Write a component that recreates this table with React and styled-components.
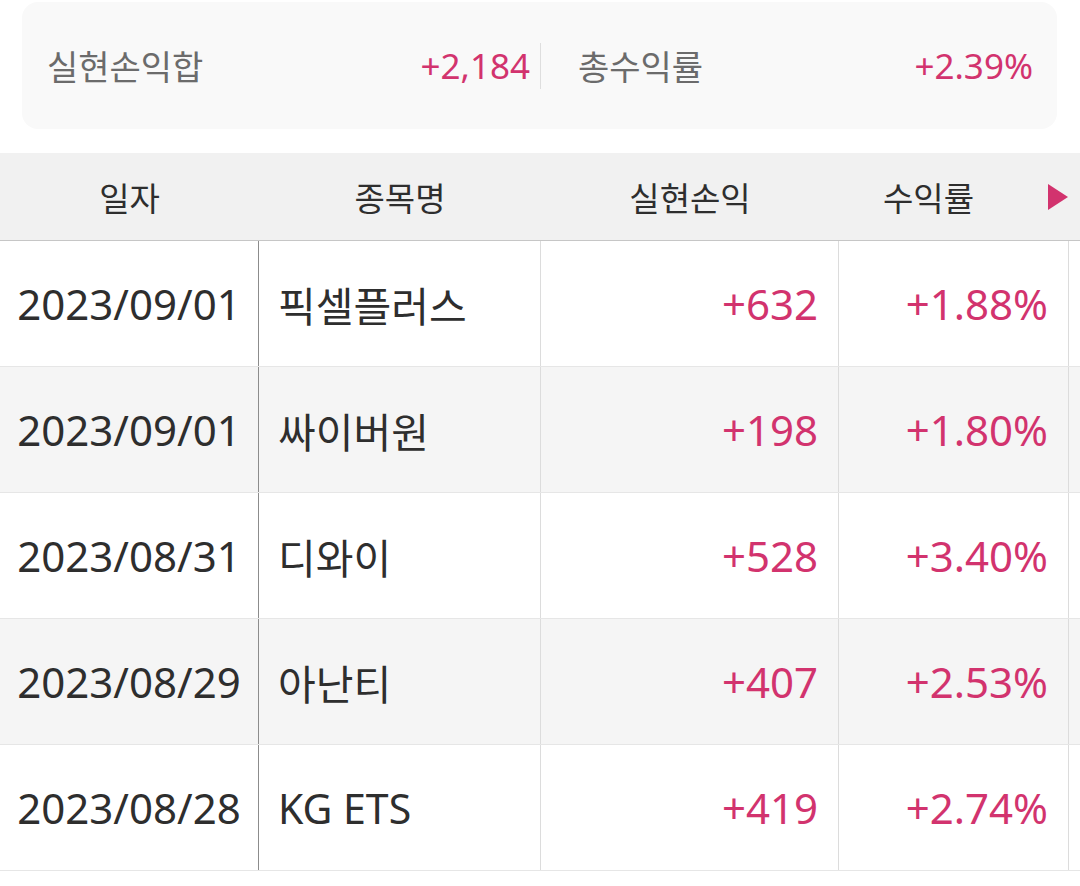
import React from "react";
import styled, { createGlobalStyle } from "styled-components";

const GlobalStyle = createGlobalStyle`
  html, body {
    margin: 0;
    padding: 0;
    background: #ffffff;
  }
  body {
    font-family: "Noto Sans", "Noto Sans CJK KR", sans-serif;
  }
`;

const PINK = "#d2336e";

const Page = styled.div`
  width: 1080px;
  padding-top: 2px;
`;

const Summary = styled.div`
  display: flex;
  align-items: center;
  height: 127px;
  margin: 0 23px 0 22px;
  padding: 0 24px 0 25px;
  background: #f9f9f9;
  border-radius: 16px;
  box-sizing: border-box;
`;

const SummaryHalf = styled.div`
  display: flex;
  align-items: center;
  justify-content: space-between;
  box-sizing: border-box;
  ${({ $first }) =>
    $first ? "width: 493px; padding-right: 10px;" : "flex: 1; padding-left: 37px;"}
`;

const SummaryLabel = styled.span`
  font-size: 34px;
  color: #6b6b6b;
`;

const SummaryValue = styled.span`
  font-size: 35px;
  color: ${PINK};
`;

const Divider = styled.div`
  width: 1px;
  height: 46px;
  background: #dedede;
`;

const Table = styled.div`
  margin-top: 24px;
`;

const cols = "259px 282px 298px 230px 1fr";

const HeaderRow = styled.div`
  display: grid;
  grid-template-columns: ${cols};
  height: 87px;
  background: #f1f1f1;
  border-bottom: 1px solid #c6c6c6;
`;

const HeadCell = styled.div`
  display: flex;
  align-items: center;
  justify-content: center;
  font-size: 33px;
  color: #2e2e2e;
`;

const HeadLabel = styled.span`
  flex: 1;
  text-align: center;
  padding-right: 30px;
`;

const Arrow = styled.svg`
  width: 20px;
  height: 26px;
  margin-right: 1px;
  flex-shrink: 0;
`;

const Row = styled.div`
  display: grid;
  grid-template-columns: ${cols};
  height: 125px;
  background: ${({ $shaded }) => ($shaded ? "#f5f5f5" : "#ffffff")};
  border-bottom: 1px solid #e6e6e6;
`;

const Cell = styled.div`
  display: flex;
  align-items: center;
  justify-content: ${({ $align }) =>
    $align === "right" ? "flex-end" : $align === "left" ? "flex-start" : "center"};
  padding: ${({ $align }) =>
    $align === "right" ? "0 20px 0 0" : $align === "left" ? "0 0 0 19px" : "0"};
  border-right: 1px solid ${({ $dark }) => ($dark ? "#8c8c8c" : "#dcdcdc")};
  font-size: ${({ $size }) => $size}px;
  color: ${({ $pink }) => ($pink ? PINK : "#2e2e2e")};
  white-space: nowrap;
`;

const Filler = styled.div``;

const rows = [
  { date: "2023/09/01", name: "픽셀플러스", pl: "+632", rate: "+1.88%" },
  { date: "2023/09/01", name: "싸이버원", pl: "+198", rate: "+1.80%" },
  { date: "2023/08/31", name: "디와이", pl: "+528", rate: "+3.40%" },
  { date: "2023/08/29", name: "아난티", pl: "+407", rate: "+2.53%" },
  { date: "2023/08/28", name: "KG ETS", pl: "+419", rate: "+2.74%" },
];

export default function App() {
  return (
    <Page>
      <GlobalStyle />
      <Summary>
        <SummaryHalf $first>
          <SummaryLabel>실현손익합</SummaryLabel>
          <SummaryValue>+2,184</SummaryValue>
        </SummaryHalf>
        <Divider />
        <SummaryHalf>
          <SummaryLabel>총수익률</SummaryLabel>
          <SummaryValue>+2.39%</SummaryValue>
        </SummaryHalf>
      </Summary>

      <Table>
        <HeaderRow>
          <HeadCell>일자</HeadCell>
          <HeadCell>종목명</HeadCell>
          <HeadCell>실현손익</HeadCell>
          <HeadCell>
            <HeadLabel>수익률</HeadLabel>
            <Arrow viewBox="0 0 20 26">
              <polygon points="0,0 20,13 0,26" fill={PINK} />
            </Arrow>
          </HeadCell>
          <Filler />
        </HeaderRow>
        {rows.map((r, i) => (
          <Row key={i} $shaded={i % 2 === 1}>
            <Cell $dark $size={42}>{r.date}</Cell>
            <Cell $align="left" $size={41}>{r.name}</Cell>
            <Cell $align="right" $pink $size={42}>{r.pl}</Cell>
            <Cell $align="right" $pink $size={42}>{r.rate}</Cell>
            <Filler />
          </Row>
        ))}
      </Table>
    </Page>
  );
}
